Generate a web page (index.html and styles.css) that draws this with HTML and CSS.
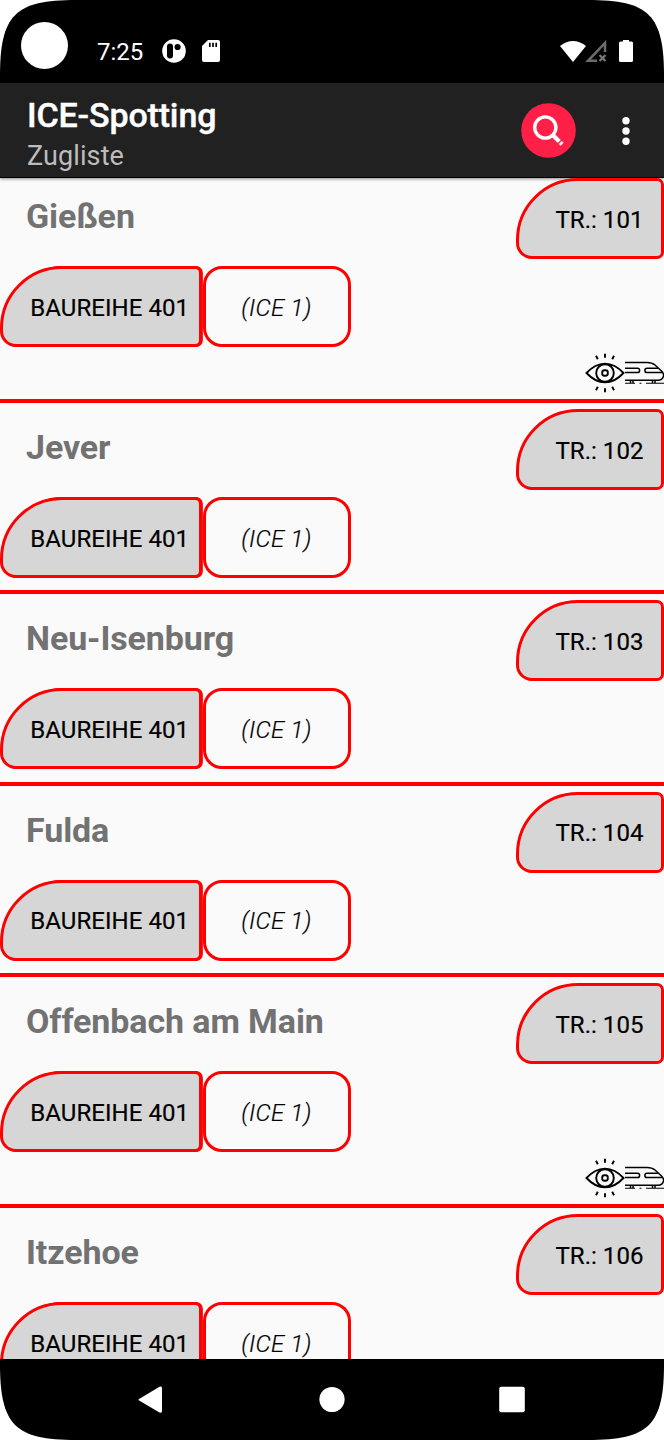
FILE: index.html
```html
<!DOCTYPE html>
<html lang="de">
<head>
<meta charset="utf-8">
<title>ICE-Spotting</title>
<link rel="stylesheet" href="styles.css">
</head>
<body>
<svg class="defs" width="0" height="0">
  <symbol id="spotted" viewBox="0 0 80 44">
    <g fill="none" stroke="#000" stroke-width="1.900">
      <path d="M2.500 22Q11 12.800 21 12.600Q31 12.800 39.500 22Q31 31.200 21 31.400Q11 31.200 2.500 22Z"/>
      <circle cx="21" cy="22" r="8.800"/>
      <rect x="18.200" y="19.200" width="5.600" height="5.600" rx="2.200"/>
      <path d="M21 2.800v4M12 4.800l1.800 3.400M30 4.800l-1.800 3.400M21 37.200v4M12 39.200l1.800-3.400M30 39.200l-1.800-3.400"/>
      <g stroke-width="1.500">
        <path d="M41 11.400H63Q68 11.400 71 14L77.500 20Q80 22.500 79.500 25Q78.500 29.300 74 29.300H41"/>
        <path d="M41 17.300H53.500a2.100 2.100 0 0 1 0 4.200H41M74 17.300H63a2.100 2.100 0 0 0 0 4.200H78.500"/>
        <path d="M46.500 29.500v2.500M49 29.500v2.500M68.500 29.500v2.500M71 29.500v2.500"/>
        <path d="M41 32.300H51M55.500 32.300H57.500M62 32.300H80" stroke-width="1.100"/>
      </g>
    </g>
  </symbol>
</svg>
<div class="screen">
  <header class="status">
    <span class="camera"></span>
    <span class="clock">7:25</span>
    <svg class="status-app" viewBox="0 0 24 24"><circle cx="12" cy="12" r="11.800" fill="#fff"/><rect x="5" y="4.600" width="6" height="15" rx="3"/><circle cx="15.600" cy="8" r="3.100"/></svg>
    <svg class="status-sd" viewBox="0 0 18 22"><path d="M6 0H16a2 2 0 0 1 2 2V20a2 2 0 0 1-2 2H2a2 2 0 0 1-2-2V6Z" fill="#fff"/><path d="M7.800 2.800v4.200M11 2.800v4.200M14.200 2.800v4.200" stroke="#000" stroke-width="1.700"/></svg>
    <svg class="status-right" viewBox="0 0 74 24">
      <path d="M0 6Q13 -4 26 6L13 22Z" fill="#fff"/>
      <path d="M45 12V3L28 20.800H37" fill="none" stroke="#6c6c6c" stroke-width="2.500"/>
      <path d="M39.500 15l6 6M45.500 15l-6 6" stroke="#777" stroke-width="2.200"/>
      <path d="M63 0h6v1.500h2.500q1.500 0 1.500 1.500V20.500q0 1.500-1.500 1.500H60.500Q59 22 59 20.500V3q0-1.500 1.500-1.500H63Z" fill="#fff"/>
    </svg>
  </header>
  <div class="appbar">
    <div class="titles">
      <h1 class="title">ICE-Spotting</h1>
      <div class="subtitle">Zugliste</div>
    </div>
    <svg class="search" viewBox="0 0 55 55"><circle cx="27.500" cy="27.500" r="27.300" fill="#ff1f47"/><g fill="none" stroke="#fff"><circle cx="24.300" cy="24.500" r="10.600" stroke-width="3.400"/><path d="M31.500 31.700l6.800 6.800" stroke-width="4.200"/><path d="M39.300 39.500l1.800 1.800" stroke-width="4.200"/></g></svg>
    <svg class="more" viewBox="0 0 8 30"><g fill="#fff"><circle cx="4" cy="4.800" r="3.700"/><circle cx="4" cy="15" r="3.700"/><circle cx="4" cy="25.200" r="3.700"/></g></svg>
  </div>
  <main class="list">
    <section class="row seen">
      <div class="head"><h2 class="name">Gießen</h2><span class="tag number">TR.: 101</span></div>
      <div class="series"><span class="tag class">BAUREIHE 401</span><span class="tag model">(ICE 1)</span></div>
      <svg class="spotted"><use href="#spotted"/></svg>
    </section>
    <section class="row">
      <div class="head"><h2 class="name">Jever</h2><span class="tag number">TR.: 102</span></div>
      <div class="series"><span class="tag class">BAUREIHE 401</span><span class="tag model">(ICE 1)</span></div>
    </section>
    <section class="row">
      <div class="head"><h2 class="name">Neu-Isenburg</h2><span class="tag number">TR.: 103</span></div>
      <div class="series"><span class="tag class">BAUREIHE 401</span><span class="tag model">(ICE 1)</span></div>
    </section>
    <section class="row">
      <div class="head"><h2 class="name">Fulda</h2><span class="tag number">TR.: 104</span></div>
      <div class="series"><span class="tag class">BAUREIHE 401</span><span class="tag model">(ICE 1)</span></div>
    </section>
    <section class="row seen">
      <div class="head"><h2 class="name">Offenbach am Main</h2><span class="tag number">TR.: 105</span></div>
      <div class="series"><span class="tag class">BAUREIHE 401</span><span class="tag model">(ICE 1)</span></div>
      <svg class="spotted"><use href="#spotted"/></svg>
    </section>
    <section class="row">
      <div class="head"><h2 class="name">Itzehoe</h2><span class="tag number">TR.: 106</span></div>
      <div class="series"><span class="tag class">BAUREIHE 401</span><span class="tag model">(ICE 1)</span></div>
    </section>
  </main>
  <nav class="nav">
    <svg class="nav-icon" viewBox="0 0 28 28"><path d="M1.500 12.800 21.500 .8Q24 -.2 24 2V25Q24 27.500 21.500 26.500L1.500 14.800Q-.5 13.800 1.500 12.800Z" fill="#fff"/></svg>
    <svg class="nav-icon" viewBox="0 0 28 28"><circle cx="14" cy="13.500" r="12.600" fill="#fff"/></svg>
    <svg class="nav-icon" viewBox="0 0 28 28"><rect x="1.200" y=".7" width="25.600" height="25.600" rx="2" fill="#fff"/></svg>
  </nav>
</div>
</body>
</html>
```

FILE: styles.css
```css
* { box-sizing: border-box; }
body { margin: 0; background: #fff; font-family: Roboto, sans-serif; }
.defs { display: block; }
.screen {
  width: 664px; height: 1440px;
  display: flex; flex-direction: column;
  background: #fafafa;
  clip-path: path("M0 76C0 15 15 0 76 0H588C649 0 664 15 664 76V1364C664 1425 649 1440 588 1440H76C15 1440 0 1425 0 1364Z");
}
.status { flex: none; height: 83px; background: #000; color: #fff; display: flex; align-items: flex-start; padding: 22px 30px 0 21px; }
.camera { width: 47px; height: 47px; border-radius: 50%; background: #fff; }
.clock { font-size: 24px; line-height: 30px; margin: 15px 0 0 29px; width: 65px; }
.status-app { width: 24px; height: 24px; margin-top: 17px; }
.status-sd { width: 18px; height: 22px; margin: 18px 0 0 16px; }
.status-right { width: 74px; height: 24px; margin: 18px 0 0 auto; }
.appbar { flex: none; height: 95px; background: #212121; display: flex; align-items: center; padding: 1px 34px 0 27px; box-shadow: 0 1px 3px rgba(0,0,0,.45); border-bottom: 1px solid #000; }
.titles { flex: 1; padding-top: 10px; }
.title { margin: 0; color: #fff; font-size: 34px; line-height: 40px; font-weight: 500; letter-spacing: -.15px; -webkit-text-stroke: .4px #fff; }
.subtitle { color: #bcbcbc; font-size: 27px; line-height: 42px; letter-spacing: .1px; }
.search { width: 55px; height: 55px; }
.more { width: 8px; height: 30px; margin-left: 46px; }
.list { flex: 1; min-height: 0; overflow: hidden; }
.row { height: 191.4px; padding-top: 6px; border-bottom: 4px solid #f00; }
.row.seen { height: 231px; }
.row:first-child { margin-top: -6px; }
.head { display: flex; justify-content: space-between; height: 88px; }
.name { margin: 12px 0 0 26px; font-size: 34px; line-height: 52px; font-weight: 700; letter-spacing: -.1px; color: #727272; }
.series { display: flex; gap: 1px; }
.tag { display: flex; align-items: center; justify-content: flex-end; height: 81px; padding-top: 2px; border: 3px solid #f00; background: #d6d6d6; color: #000; font-size: 24px; letter-spacing: .05px; border-radius: 62px 7px 7px 16px; white-space: nowrap; -webkit-text-stroke: .2px #000; }
.number { width: 148.500px; padding-right: 17.500px; }
.class { width: 202px; padding-right: 10px; box-shadow: 1px 0 0 -0.1px #f00; }
.model { width: 148px; padding-right: 1px; justify-content: center; background: #fafafa; border-radius: 19px; font-style: italic; font-weight: 300; letter-spacing: .3px; }
.spotted { display: block; width: 80px; height: 44px; margin: 4px 0 0 auto; }
.nav { flex: none; height: 81px; background: #000; display: flex; align-items: center; justify-content: center; gap: 152px; }
.nav-icon { width: 28px; height: 28px; }
```
